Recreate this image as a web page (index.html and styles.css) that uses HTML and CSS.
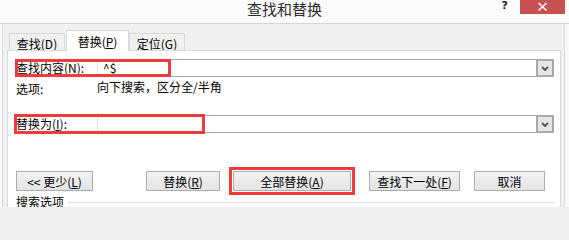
FILE: index.html
```html
<!DOCTYPE html>
<html lang="zh-CN">
<head>
<meta charset="utf-8">
<title>查找和替换</title>
<link rel="stylesheet" href="styles.css">
</head>
<body>
<div class="window">
  <div class="titlebar">
    <div class="tb-side"></div>
    <div class="title">查找和替换</div>
    <div class="tb-side tb-controls">
      <span class="help">?</span>
      <span class="close"><svg width="45" height="14" viewBox="0 0 45 14"><path d="M18.5 3 L26.5 10.5 M26.5 3 L18.5 10.5" stroke="#fff" stroke-width="1.6" fill="none"/></svg></span>
    </div>
  </div>
  <div class="content">
    <div class="tabs">
      <div class="tab tab-first">查找(<u>D</u>)</div>
      <div class="tab tab-active">替换(<u>P</u>)</div>
      <div class="tab">定位(<u>G</u>)</div>
    </div>
    <div class="panel">
      <div class="row row-find">
        <span class="label">查找内容(<u>N</u>):</span>
        <div class="combo">
          <span class="combo-text">^$</span>
          <span class="drop"><svg width="8" height="5" viewBox="0 0 8 5"><path d="M1 1 L4 4 L7 1" stroke="#5a5a5a" stroke-width="2" fill="none"/></svg></span>
        </div>
        <div class="mark mark-find"></div>
      </div>
      <div class="options">
        <span class="label">选项:</span>
        <span>向下搜索，区分全/半角</span>
      </div>
      <div class="row row-replace">
        <span class="label">替换为(<u>I</u>):</span>
        <div class="combo">
          <span class="combo-text"></span>
          <span class="drop"><svg width="8" height="5" viewBox="0 0 8 5"><path d="M1 1 L4 4 L7 1" stroke="#5a5a5a" stroke-width="2" fill="none"/></svg></span>
        </div>
        <div class="mark mark-replace"></div>
      </div>
      <div class="buttons">
        <button class="btn btn-less">&lt;&lt; 更少(<u>L</u>)</button>
        <button class="btn btn-replace">替换(<u>R</u>)</button>
        <button class="btn btn-all">全部替换(<u>A</u>)</button>
        <button class="btn btn-next">查找下一处(<u>F</u>)</button>
        <button class="btn btn-cancel">取消</button>
      </div>
      <div class="group">
        <span class="group-label">搜索选项</span>
        <span class="group-line"></span>
      </div>
    </div>
  </div>
</div>
</body>
</html>
```
FILE: styles.css
```css
* { box-sizing: border-box; }
html, body { margin: 0; padding: 0; }
body {
  font-family: "Noto Sans CJK SC", "Noto Sans", sans-serif;
  font-size: 12px;
  color: #000;
  background: #f0f0f0;
}
u { text-decoration: underline; text-underline-offset: 1px; }

.window {
  width: 569px;
  height: 207px;
  overflow: hidden;
  background: #f9f9f9;
  display: flex;
  flex-direction: column;
}

.titlebar {
  height: 24px;
  flex: none;
  display: grid;
  grid-template-columns: 1fr auto 1fr;
  background: #fbfbfb;
  border-bottom: 1px solid #d6d6d6;
}
.title {
  font-size: 15px;
  line-height: 18px;
  color: #2b2b2b;
  letter-spacing: 0;
}
.tb-controls {
  display: flex;
  justify-content: flex-end;
  align-items: flex-start;
  padding-right: 4px;
}
.help {
  font-family: "DejaVu Sans", sans-serif;
  font-weight: bold;
  font-size: 11px;
  line-height: 11px;
  color: #222;
  margin-top: 0px;
  margin-right: 12px;
}
.close {
  width: 45px;
  height: 14px;
  background: #c75050;
  display: block;
}
.close svg { display: block; }

.content {
  flex: 1;
  margin-left: 2px;
  margin-right: 4px;
  border-left: 1px solid #dadada;
  border-right: 1px solid #dadada;
  background: #f0f0f0;
  padding-left: 4px;
  padding-right: 3px;
  display: flex;
  flex-direction: column;
}

.tabs {
  height: 26px;
  flex: none;
  display: flex;
  align-items: flex-end;
  padding-left: 2px;
}
.tab {
  height: 17px;
  width: 56px;
  border: 1px solid #d9d9d9;
  border-bottom: none;
  background: #f0f0f0;
  text-align: center;
  line-height: 15px;
  padding-top: 2px;
  white-space: nowrap;
}
.tab-active {
  width: 63px;
  height: 21px;
  margin-left: 1px;
  margin-bottom: -1px;
  background: #fff;
  position: relative;
  z-index: 1;
  padding-top: 3px;
}

.panel {
  flex: 1;
  background: #fff;
  border: 1px solid #d9d9d9;
  padding: 8px 6px 0 8px;
}

.row {
  position: relative;
  height: 18px;
  display: flex;
  align-items: stretch;
}
.label {
  width: 81px;
  flex: none;
  line-height: 18px;
  white-space: nowrap;
}
.combo {
  flex: 1;
  display: flex;
  border: 1px solid #a9a9a9;
  border-left-color: #e2e2e2;
}
.combo-text {
  flex: 1;
  padding-left: 5px;
  line-height: 16px;
}
.drop {
  width: 18px;
  flex: none;
  margin: -1px -1px -1px 0;
  border: 2px solid #a8a8a8;
  background: #e6e6e6;
  display: flex;
  align-items: center;
  justify-content: center;
}
.drop svg { display: block; }

.mark {
  position: absolute;
  border: 3px solid #ee3b3b;
  pointer-events: none;
}
.mark-find { left: -1px; top: 0; width: 156px; height: 18px; }
.mark-replace { left: -2px; top: -1px; width: 191px; height: 20px; }

.options {
  margin-top: 3px;
  height: 14px;
  line-height: 14px;
  display: flex;
}

.row-replace { margin-top: 21px; }

.buttons {
  margin-top: 38px;
  display: flex;
  height: 20px;
}
.btn {
  font-family: inherit;
  font-size: 12px;
  color: #000;
  height: 20px;
  padding: 0;
  margin: 0;
  border: 1px solid #acacac;
  background: linear-gradient(#f2f2f2, #e4e4e4);
  line-height: 17px;
  text-align: center;
  white-space: nowrap;
}
.btn-less { width: 77px; }
.btn-replace { width: 74px; margin-left: 53px; }
.btn-all {
  width: 118px;
  margin-left: 13px;
  outline: 3px solid #ee3b3b;
  outline-offset: 1px;
}
.btn-next { width: 91px; margin-left: 18px; }
.btn-cancel { width: 71px; margin-left: 14px; }

.group {
  margin-top: 4px;
  display: flex;
  align-items: center;
  height: 14px;
}
.group-label { line-height: 14px; white-space: nowrap; }
.group-line {
  flex: 1;
  border-top: 1px solid #dcdcdc;
  margin-left: 4px;
  margin-top: 0;
}
```
